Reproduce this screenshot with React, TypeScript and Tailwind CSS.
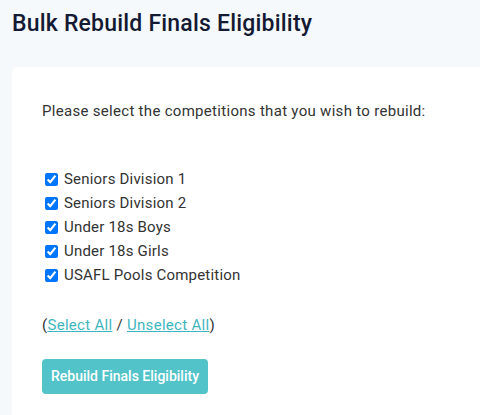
import React, { useState } from 'react';

const competitions = [
  'Seniors Division 1',
  'Seniors Division 2',
  'Under 18s Boys',
  'Under 18s Girls',
  'USAFL Pools Competition',
];

function App() {
  const [checked, setChecked] = useState<boolean[]>(competitions.map(() => true));

  const setAll = (value: boolean) => setChecked(competitions.map(() => value));

  return (
    <div className="min-h-[415px] bg-[#f5f9fc] pl-3 pt-[9px] font-['Roboto',sans-serif] text-[#333]">
      <h1 className="text-[23px] font-medium leading-[30px] tracking-[0.2px] text-[#141a33]">Bulk Rebuild Finals Eligibility</h1>
      <div className="mt-7 rounded-tl-md bg-white pl-[30px] pt-[34px] pb-6 min-h-[349px]">
        <p className="text-[15px] leading-5 tracking-[0.3px]">Please select the competitions that you wish to rebuild:</p>
        <ul className="mt-[48px] flex flex-col gap-1">
          {competitions.map((name, i) => (
            <li key={name} className="flex h-5 items-center text-[15px] tracking-[0.2px]">
              <input
                type="checkbox"
                checked={checked[i]}
                onChange={() => setChecked(checked.map((c, j) => (j === i ? !c : c)))}
                className="ml-[3px] mr-[6px] h-[13px] w-[13px] accent-[#0075ff]"
              />
              <span>{name}</span>
            </li>
          ))}
        </ul>
        <p className="mt-[30px] text-[15px] leading-5 tracking-[0.3px]">
          (
          <a href="#" onClick={(e) => { e.preventDefault(); setAll(true); }} className="text-[#3fb6bf] underline">Select All</a>
          {' / '}
          <a href="#" onClick={(e) => { e.preventDefault(); setAll(false); }} className="text-[#3fb6bf] underline">Unselect All</a>
          )
        </p>
        <button className="mt-6 h-[35px] w-[166px] rounded-[4px] bg-[#52c4c9] text-[14px] font-medium text-white">
          Rebuild Finals Eligibility
        </button>
      </div>
    </div>
  );
}

export default App;
